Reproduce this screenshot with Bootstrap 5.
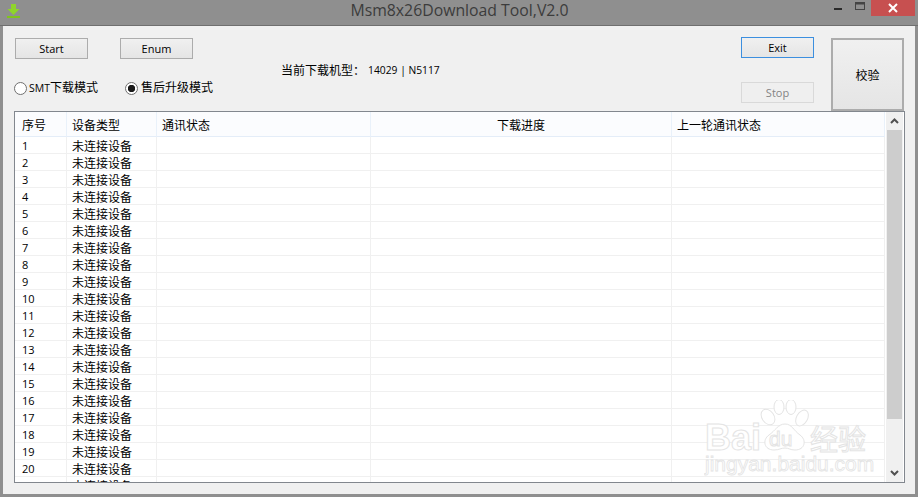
<!DOCTYPE html>
<html lang="zh"><head><meta charset="utf-8"><title>Msm8x26Download Tool,V2.0</title>
<link href="https://cdn.jsdelivr.net/npm/bootstrap@5.3.0/dist/css/bootstrap.min.css" rel="stylesheet">
<style>
html,body{margin:0;height:497px;width:918px;overflow:hidden;background:#8f8f8f}
body{font-family:"Open Sans","Noto Sans CJK SC",sans-serif;font-size:11px;color:#000;line-height:1}
.appwin{width:918px;height:497px;background:#8f8f8f;display:flex;flex-direction:column}
.titlerow{height:26px;flex:none;display:flex;position:relative;align-items:flex-start;border-bottom:1px solid #6f6f6f}
.appicon{margin:4px 0 0 7px;flex:none}
.apptitle{flex:1;text-align:center;font-size:15.8px;line-height:21px;color:#3c3c3c;padding-left:72px}
.wbtn{flex:none;display:flex;align-items:center;justify-content:center}
.wmin{width:22px;height:17px}
.wmax{width:22px;height:13px}
.wclose{width:44px;height:16px;background:#c75050;margin-right:3px}
.client{flex:1;margin:0 3px 3px 3px;background:#f0f0f0;display:flex;flex-direction:column;min-height:0}
.toppanel{height:85px;flex:none;display:flex;position:relative;z-index:1}
.leftcol{width:266px;margin-left:12px;padding-top:12px;flex:none}
.btnrow{display:flex;gap:32px}
.winbtn.btn{width:73px;height:21px;padding:0;border-radius:0;font-size:11px;line-height:1;color:#000;border:1px solid #acacac;background:linear-gradient(#f0f0f0,#e5e5e5);display:flex;align-items:center;justify-content:center}
.winbtn.btn.focusbtn{border-color:#3c8fdf}
.winbtn.btn:disabled{color:#838383;border-color:#d9d9d9;background:#efefef;opacity:1}
.radiorow{display:flex;margin-top:22px;margin-left:-1px;height:14px}
.rad{display:flex;align-items:center;width:111px;font-size:12px}
.smtword{font-size:10.5px}
.rad .form-check-input{width:13px;height:13px;margin:0 2px 0 0;flex:none;border:1px solid #707070;background:#fff;border-radius:50%;float:none;background-image:none}
.rad .form-check-input:checked{background:#fff radial-gradient(circle,#1a1a1a 0,#1a1a1a 3.4px,#fff 4px);border-color:#707070}
.rad:last-child .form-check-input{margin-right:3px}
.midcol{width:460px;flex:none;padding-top:37px;display:flex;align-items:center;height:52px;font-size:12px}
.midval{font-size:10.3px;margin-left:3px}
.rightcol{width:73px;flex:none;padding-top:11px;display:flex;flex-direction:column;gap:24px}
.checkbtn.btn{width:73px;height:73px;margin:12px 0 0 17px;padding:2px 0 0;border-radius:0;font-size:12px;color:#000;border:2px solid #acacac;background:linear-gradient(#f0f0f0,#e5e5e5);flex:none}
.gridwrap{height:372px;margin:0 10px 0 11px;border:1px solid #82878e;background:#fff;display:flex;position:relative;flex:none}
.gridpane{width:871px;overflow:hidden;flex:none}
.dgrid{table-layout:fixed;width:870px;margin:0;border-collapse:separate;border-spacing:0;font-size:12px}
.dgrid>thead>tr>th{height:25px;padding:4px 0 0 5px;font-weight:400;background:#fbfcfe;border-bottom:1px solid #e4edf8;border-right:1px solid #e9f1fa;vertical-align:middle;color:#000;box-shadow:none}
.dgrid>thead>tr>th:first-child{padding-left:7px}
.dgrid>thead>tr>th.progresshead{padding-left:0}
.dgrid>tbody>tr>td{height:17px;padding:4px 0 0 5px;border-bottom:1px solid #f0f0f0;border-right:1px solid #f0f0f0;vertical-align:middle;color:#000;box-shadow:none;background:#fff;line-height:1;white-space:nowrap;overflow:hidden}
.dgrid>tbody>tr>td.numcell{font-size:11px;padding:0 0 0 7px}
.scroller{width:17px;background:#f0f0f0;display:flex;flex-direction:column;align-items:stretch;flex:none}
.sarrow{height:18px;flex:none;display:flex;align-items:center;justify-content:center}
.sthumb{height:289px;background:#cdcdcd;margin:0 1px;flex:none}
.sspace{flex:1}
.wmark{position:absolute;left:689px;top:288px;pointer-events:none}
</style></head>
<body>
<div class="appwin">
  <div class="titlerow">
    <svg class="appicon" width="13" height="14" viewBox="0 0 13 14"><path d="M4 0h5v5h3.500L6.500 11 .5 5H4z" fill="#8fd42a"/><rect x="0" y="12" width="13" height="2" fill="#7fc41c"/></svg>
    <div class="apptitle">Msm8x26Download Tool,V2.0</div>
    <div class="wbtn wmin"><svg width="8" height="3"><rect width="8" height="2" y="1" fill="#2a2a2a"/></svg></div>
    <div class="wbtn wmax"><svg width="11" height="9"><rect x=".5" y=".5" width="9" height="7" fill="none" stroke="#444"/><rect x="0" y="0" width="10" height="2.500" fill="#444"/></svg></div>
    <div class="wbtn wclose"><svg width="10" height="10"><path d="M1 1l8 8M9 1l-8 8" stroke="#fff" stroke-width="2"/></svg></div>
  </div>
  <div class="client">
    <div class="toppanel">
      <div class="leftcol">
        <div class="btnrow">
          <button class="btn winbtn" type="button">Start</button>
          <button class="btn winbtn" type="button">Enum</button>
        </div>
        <div class="radiorow">
          <label class="rad"><input class="form-check-input" type="radio" name="mode"><span><span class="smtword">SMT</span>下载模式</span></label>
          <label class="rad"><input class="form-check-input" type="radio" name="mode" checked>售后升级模式</label>
        </div>
      </div>
      <div class="midcol"><span>当前下载机型：</span><span class="midval">14029 | N5117</span></div>
      <div class="rightcol">
        <button class="btn winbtn focusbtn" type="button">Exit</button>
        <button class="btn winbtn" type="button" disabled>Stop</button>
      </div>
      <button class="btn checkbtn" type="button">校验</button>
    </div>
    <div class="gridwrap">
      <div class="gridpane">
        <table class="table dgrid">
          <colgroup><col style="width:52px"><col style="width:90px"><col style="width:214px"><col style="width:301px"><col style="width:213px"></colgroup>
          <thead><tr><th>序号</th><th>设备类型</th><th>通讯状态</th><th class="text-center progresshead">下载进度</th><th>上一轮通讯状态</th></tr></thead>
          <tbody id="rows"></tbody>
        </table>
      </div>
      <div class="scroller">
        <div class="sarrow"><svg width="9" height="6"><path d="M1 5l3.500-3.500L8 5" fill="none" stroke="#505050" stroke-width="2"/></svg></div>
        <div class="sthumb"></div>
        <div class="sspace"></div>
        <div class="sarrow"><svg width="9" height="6"><path d="M1 1l3.500 3.500L8 1" fill="none" stroke="#505050" stroke-width="2"/></svg></div>
      </div>
      <svg class="wmark" width="182" height="82" viewBox="0 0 182 82">
        <g fill="#fff" stroke="#e4e4e4" stroke-width="1">
          <ellipse cx="64" cy="17" rx="6" ry="8.500" transform="rotate(-35 64 17)"/>
          <ellipse cx="75" cy="7" rx="5" ry="7.500"/>
          <ellipse cx="87" cy="7" rx="5" ry="7.500"/>
          <ellipse cx="98" cy="18" rx="5.500" ry="8.500" transform="rotate(30 98 18)"/>
          <path d="M81 24c7 0 9 7 15 11 7 5 5 15-5 15-5 0-6-2-10-2s-6 2-11 2c-10 0-12-10-5-15 6-4 9-11 16-11z"/>
        </g>
        <g font-family="'Liberation Sans',sans-serif" fill="#fff" stroke="#e4e4e4" stroke-width="1">
          <text x="1" y="50" font-size="36" font-weight="700">Bai</text>
          <text x="65" y="46" font-size="21">du</text>
          <text x="106" y="50" font-size="28" font-family="'Noto Sans CJK SC',sans-serif">经验</text>
          <text x="1" y="71" font-size="21" stroke-width=".8">jingyan.baidu.com</text>
        </g>
      </svg>
    </div>
  </div>
</div>
<script>
var b=document.getElementById('rows'),h='';
for(var i=1;i<=21;i++){h+='<tr><td class="numcell">'+i+'</td><td>未连接设备</td><td></td><td></td><td></td></tr>';}
b.innerHTML=h;
</script>
<script src="https://cdn.jsdelivr.net/npm/bootstrap@5.3.0/dist/js/bootstrap.bundle.min.js"></script>
</body></html>
